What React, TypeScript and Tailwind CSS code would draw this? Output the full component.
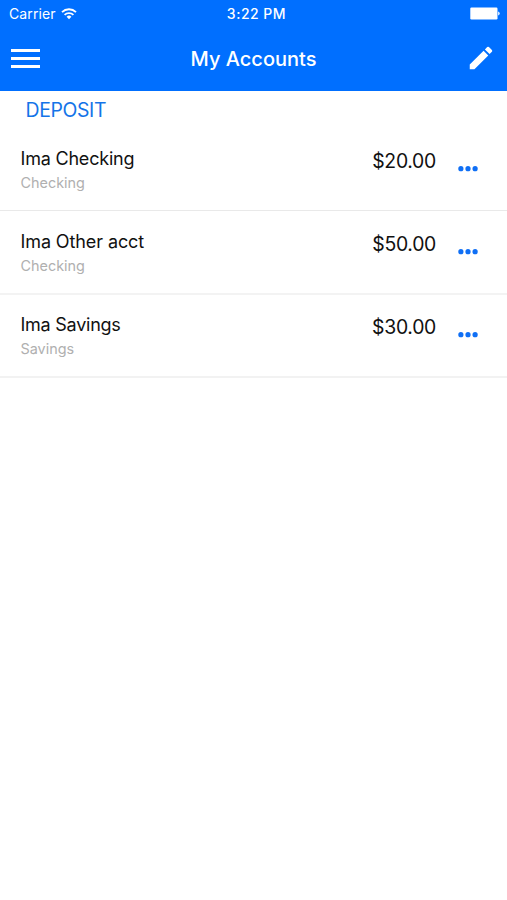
interface Account {
  name: string;
  type: string;
  balance: string;
  nameSpacing: string;
  divider: string;
}

const accounts: Account[] = [
  {
    name: "Ima Checking",
    type: "Checking",
    balance: "$20.00",
    nameSpacing: "tracking-[-0.2px]",
    divider: "h-[83px] border-b border-[#e9e9e9]",
  },
  {
    name: "Ima Other acct",
    type: "Checking",
    balance: "$50.00",
    nameSpacing: "tracking-[-0.1px]",
    divider: "h-[84px] -mb-px border-b-2 border-[#f3f3f3]",
  },
  {
    name: "Ima Savings",
    type: "Savings",
    balance: "$30.00",
    nameSpacing: "tracking-[-0.25px]",
    divider: "h-[84px] -mb-px border-b-2 border-[#f2f2f2]",
  },
];

function WifiIcon() {
  return (
    <svg className="w-4 h-3" viewBox="0 0 16 12" fill="none" stroke="white" strokeWidth="1.9">
      <path d="M1 4.1 A10.2 10.2 0 0 1 15 4.1" />
      <path d="M3.6 6.9 A6.4 6.4 0 0 1 12.4 6.9" />
      <path d="M8 11.2 L5.6 8.7 A3.5 3.5 0 0 1 10.4 8.7 Z" fill="white" stroke="none" />
    </svg>
  );
}

function BatteryIcon() {
  return (
    <svg className="w-[30px] h-[13px]" viewBox="0 0 30 13" fill="white">
      <rect x="0.3" y="0.5" width="27.2" height="12" rx="1.2" />
      <path d="M28.2 4.5 a2.1 2.1 0 0 1 0 4 Z" />
    </svg>
  );
}

function PencilIcon() {
  return (
    <svg className="w-[30px] h-[30px]" viewBox="0 0 24 24" fill="white">
      <path d="M3 17.25V21h3.75L17.81 9.94l-3.75-3.75L3 17.25zM20.71 7.04a1 1 0 0 0 0-1.41l-2.34-2.34a1 1 0 0 0-1.41 0l-1.83 1.83 3.75 3.75 1.83-1.83z" />
    </svg>
  );
}

function DotsIcon() {
  return (
    <svg className="w-5 h-[6px]" viewBox="0 0 20 6" fill="#0f6ff5">
      <circle cx="2.9" cy="2.7" r="2.6" />
      <circle cx="10" cy="2.7" r="2.6" />
      <circle cx="17.1" cy="2.7" r="2.6" />
    </svg>
  );
}

function StatusBar() {
  return (
    <div className="h-[27px] grid grid-cols-[1fr_64px_1fr] items-center pl-[9px] pr-[7px] text-sm leading-[27px]">
      <div className="flex items-center gap-[5px]">
        <span className="tracking-[0.1px]">Carrier</span>
        <WifiIcon />
      </div>
      <span className="pl-1 text-center whitespace-nowrap font-medium tracking-[0.5px]">3:22 PM</span>
      <div className="flex justify-end">
        <BatteryIcon />
      </div>
    </div>
  );
}

function NavBar() {
  return (
    <div className="h-16 grid grid-cols-[60px_1fr_60px] items-center px-[11px] pb-px">
      <div className="w-[29px] flex flex-col gap-[5px] pb-px">
        <div className="h-[3px] bg-white" />
        <div className="h-[3px] bg-white" />
        <div className="h-[3px] bg-white" />
      </div>
      <h1 className="text-center text-xl font-medium">My Accounts</h1>
      <div className="flex justify-end pb-px">
        <PencilIcon />
      </div>
    </div>
  );
}

function AccountRow({ account }: { account: Account }) {
  return (
    <div className={`flex items-start pl-[20.5px] pr-[29px] ${account.divider}`}>
      <div className="flex-1 pt-[19px]">
        <div className={`text-lg leading-6 text-[#111] ${account.nameSpacing}`}>{account.name}</div>
        <div className="mt-[2px] text-[14.4px] leading-5 text-[#b0b0b0]">{account.type}</div>
      </div>
      <div className="pt-[21px] text-[19.4px] leading-6 tracking-[-0.3px] text-[#111]">{account.balance}</div>
      <div className="ml-[22px] pt-[38px]">
        <DotsIcon />
      </div>
    </div>
  );
}

export default function App() {
  return (
    <div className="w-full h-[900px] bg-white font-['Inter',sans-serif]">
      <header className="bg-[#006fff] text-white">
        <StatusBar />
        <NavBar />
      </header>
      <div className="h-[37px] pl-[25.5px] text-[19.4px] leading-[39px] tracking-[-0.35px] text-[#1474e8]">DEPOSIT</div>
      {accounts.map((account) => (
        <AccountRow key={account.name} account={account} />
      ))}
    </div>
  );
}
